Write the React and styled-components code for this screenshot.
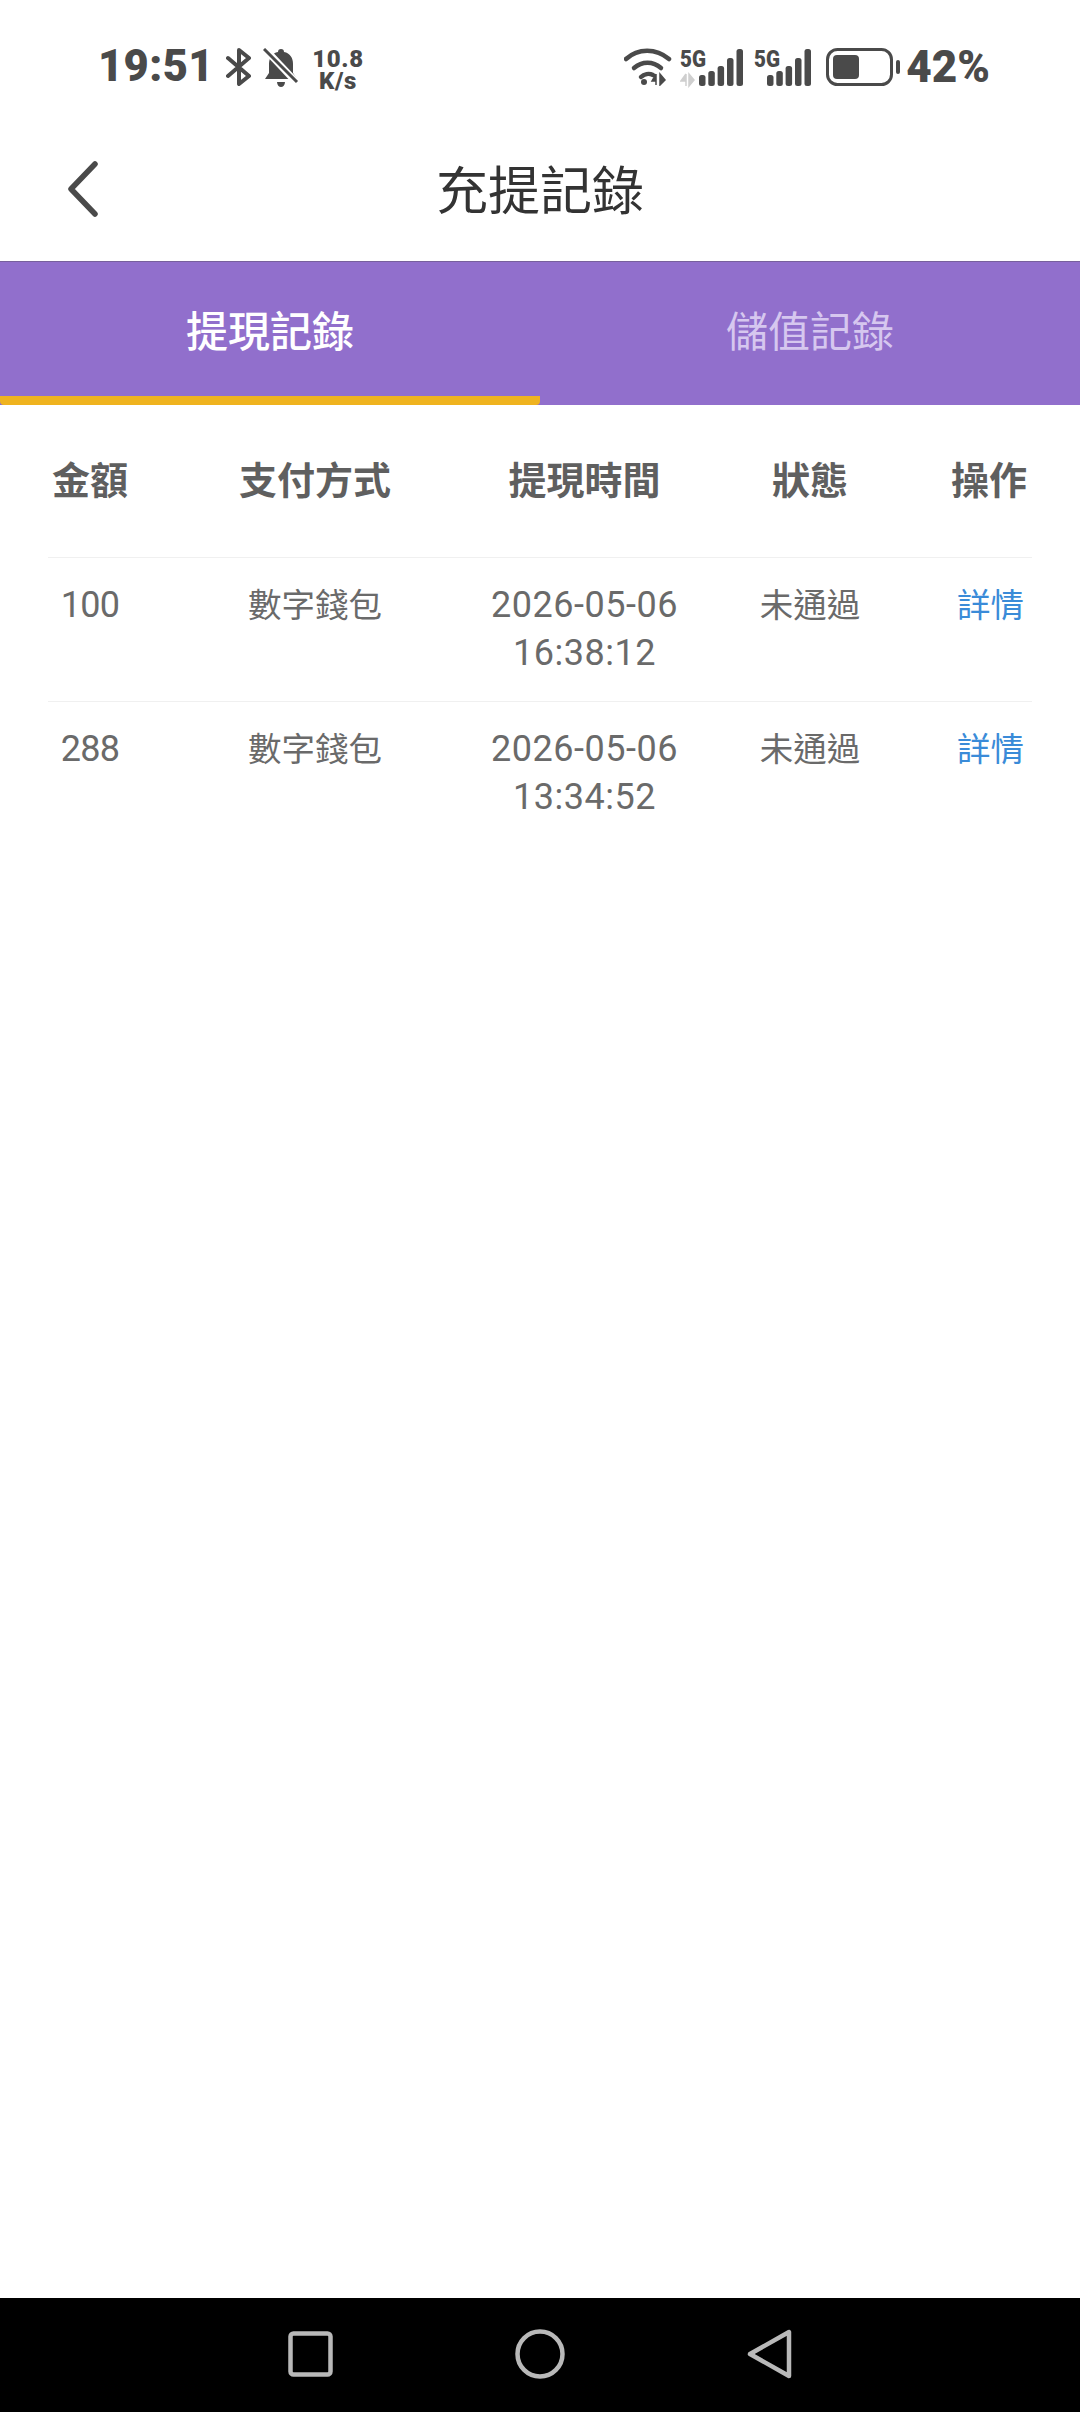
import React from "react";
import styled, { createGlobalStyle } from "styled-components";

const CJK = `"Noto Sans CJK TC", "Noto Sans CJK SC", sans-serif`;
const LATIN = `Roboto, "Noto Sans CJK TC", sans-serif`;

const Global = createGlobalStyle`
  html, body { margin: 0; padding: 0; background: #fff; }
  #root { height: 2412px; }
  * { box-sizing: border-box; }
`;

const Screen = styled.div`
  width: 1080px;
  height: 2412px;
  display: flex;
  flex-direction: column;
  background: #fff;
  font-family: ${CJK};
`;

const StatusBar = styled.div`
  height: 117px;
  padding: 48px 90px 0 98px;
  display: flex;
  justify-content: space-between;
  align-items: flex-start;
  color: #4a4a4a;
`;

const StatusGroup = styled.div`
  display: flex;
  align-items: flex-start;
`;

const Clock = styled.span`
  font: 900 43.5px/38px ${LATIN};
  letter-spacing: 0.4px;
  width: 128px;
`;

const Speed = styled.span`
  margin-left: 11px;
  width: 56px;
  display: flex;
  flex-direction: column;
  align-items: center;
  font: 900 24px/22px ${LATIN};
  letter-spacing: 0.6px;
`;

const Percent = styled.span`
  font: 900 44px/38px ${LATIN};
  margin-left: 6px;
`;

const Icon = styled.svg`
  display: block;
  flex: none;
  margin-left: ${(p) => p.$ml || 0}px;
`;

const SignalIcon = styled(Icon)`
  margin-top: -6px;
`;

const TitleBar = styled.header`
  height: 144px;
  display: grid;
  grid-template-columns: 1fr auto 1fr;
  align-items: center;
`;

const BackButton = styled.div`
  padding-left: 65px;
  display: flex;
  align-items: center;
`;

const Title = styled.h1`
  margin: 0 0 2px;
  font: 400 52px/60px ${CJK};
  color: #333;
`;

const Tabs = styled.nav`
  height: 144px;
  display: flex;
  background: #916fcc;
  border-top: 1px solid #77609c;
`;

const Tab = styled.div`
  flex: 1;
  display: flex;
  align-items: center;
  justify-content: center;
  padding-bottom: 0;
  font: ${(p) => (p.$active ? 500 : 400)} 42px/60px ${CJK};
  color: ${(p) => (p.$active ? "#fff" : "#d6c7ef")};
  border-bottom: 9px solid ${(p) => (p.$active ? "#efb31f" : "transparent")};
  border-radius: 0 0 4px 4px;
`;

const Table = styled.section`
  flex: 1;
  padding: 0 48px;
`;

const Row = styled.div`
  display: grid;
  grid-template-columns: 102px 330px 209px 257px 86px;
  ${(p) =>
    p.$head
      ? "height: 152px; align-items: center; padding-bottom: 6px;"
      : "padding: 21px 0 24px; border-top: 1px solid #f0f0f0;"}
`;

const HeadCell = styled.div`
  text-align: center;
  font: 700 38px/48px ${CJK};
  color: #5f5f5f;
  padding-right: ${(p) => p.$pr || 0}px;
`;

const Cell = styled.div`
  text-align: center;
  font: 400 33.5px/48px ${CJK};
  color: ${(p) => (p.$link ? "#3a8bd8" : "#6a6a6a")};
  padding-right: ${(p) => p.$pr || 0}px;
  padding-left: ${(p) => (p.$link ? 3 : 0)}px;
`;

const NumCell = styled(Cell)`
  font: 400 36px/48px ${LATIN};
  letter-spacing: 0.5px;
  padding-top: 2px;
`;

const AmountCell = styled(NumCell)`
  letter-spacing: -0.8px;
`;

const NavBar = styled.footer`
  height: 114px;
  background: #000;
  display: flex;
  align-items: center;
  justify-content: center;
  gap: 182px;
  padding-bottom: 2px;
`;

const Signal = ({ ml, barX, arrows }) => (
  <SignalIcon width={barX + 44} height="46" viewBox={`0 -6 ${barX + 44} 46`} $ml={ml}>
    <text x="0" y="19" fontFamily="Roboto, sans-serif" fontWeight="900" fontSize="24" fill="#4a4a4a" textLength="26" lengthAdjust="spacingAndGlyphs">5G</text>
    {arrows && (
      <path d="M6 26v12M6 26l-5 7h5M9 38V26l5 6z" fill="#cfcfcf" stroke="#cfcfcf" strokeWidth="1.5" />
    )}
    {[
      [0, 27],
      [9.3, 23],
      [18.6, 18],
      [28, 10],
      [37.5, 1],
    ].map(([x, y]) => (
      <rect key={x} x={barX + x} y={y} width="6.5" height={38 - y} rx="2.5" fill="#4a4a4a" />
    ))}
  </SignalIcon>
);

const rows = [
  { amount: "100", date: "2026-05-06", time: "16:38:12" },
  { amount: "288", date: "2026-05-06", time: "13:34:52" },
];

export default function App() {
  return (
    <Screen>
      <Global />
      <StatusBar>
        <StatusGroup>
          <Clock>19:51</Clock>
          <Icon width="26" height="38" viewBox="0 0 26 38" fill="none" stroke="#4a4a4a" strokeWidth="4" strokeLinejoin="round" strokeLinecap="round">
            <path d="M2 10l21 18-10 8V2l10 8L2 28" />
          </Icon>
          <Icon width="36" height="40" viewBox="0 0 36 40" $ml={11}>
            <path d="M18 1c2 0 3 1 3 3 6 1 9 6 9 12v9l4 6H2l4-6v-9c0-6 3-11 9-12 0-2 1-3 3-3z" fill="#4a4a4a" />
            <path d="M14 34h8c0 3-2 5-4 5s-4-2-4-5z" fill="#4a4a4a" />
            <path d="M1 0l34 36" stroke="#fff" strokeWidth="7" />
            <path d="M1 1l33 33" stroke="#4a4a4a" strokeWidth="3" />
          </Icon>
          <Speed>
            <span>10.8</span>
            <span>K/s</span>
          </Speed>
        </StatusGroup>
        <StatusGroup>
          <Icon width="48" height="38" viewBox="0 0 48 38" fill="none" stroke="#4a4a4a" strokeWidth="4.5" strokeLinecap="round">
            <path d="M2 11C14 0 32 0 45 11" />
            <path d="M10 20c8-7 19-7 27 0" />
            <path d="M17 29c3-3 8-4 12-2" />
            <circle cx="20" cy="34" r="3" fill="#4a4a4a" stroke="none" />
            <path d="M32 26v11M32 26l-4 7h4M36 37V26l5 6z" fill="#4a4a4a" stroke="#4a4a4a" strokeWidth="1.5" strokeLinecap="butt" />
          </Icon>
          <Signal ml={8} barX={19} arrows />
          <Signal ml={11} barX={13} />
          <Icon width="74" height="38" viewBox="0 0 74 38" $ml={15}>
            <rect x="1.5" y="1.5" width="64" height="35" rx="10" fill="none" stroke="#4a4a4a" strokeWidth="3" />
            <rect x="7" y="7" width="26" height="24" rx="4" fill="#4a4a4a" />
            <rect x="70" y="12" width="4" height="14" rx="2" fill="#4a4a4a" />
          </Icon>
          <Percent>42%</Percent>
        </StatusGroup>
      </StatusBar>

      <TitleBar>
        <BackButton>
          <svg width="34" height="56" viewBox="0 0 34 56" fill="none" stroke="#4a4a4a" strokeWidth="5.5" strokeLinecap="round" strokeLinejoin="round">
            <path d="M30 3L6 28l24 25" />
          </svg>
        </BackButton>
        <Title>充提記錄</Title>
      </TitleBar>

      <Tabs>
        <Tab $active>提現記錄</Tab>
        <Tab>儲值記錄</Tab>
      </Tabs>

      <Table>
        <Row $head>
          <HeadCell $pr={18}>金額</HeadCell>
          <HeadCell>支付方式</HeadCell>
          <HeadCell>提現時間</HeadCell>
          <HeadCell $pr={15}>狀態</HeadCell>
          <HeadCell>操作</HeadCell>
        </Row>
        {rows.map((r) => (
          <Row key={r.time}>
            <AmountCell $pr={18}>{r.amount}</AmountCell>
            <Cell>數字錢包</Cell>
            <NumCell>
              {r.date}
              <br />
              {r.time}
            </NumCell>
            <Cell $pr={15}>未通過</Cell>
            <Cell $link>詳情</Cell>
          </Row>
        ))}
      </Table>

      <NavBar>
        <svg width="45" height="46" viewBox="0 0 45 46" fill="none" stroke="#b9b9b9" strokeWidth="4.5">
          <rect x="2.5" y="2.5" width="40" height="41" rx="3" />
        </svg>
        <svg width="50" height="50" viewBox="0 0 50 50" fill="none" stroke="#b9b9b9" strokeWidth="4.5">
          <circle cx="25" cy="25" r="22.5" />
        </svg>
        <svg width="46" height="50" viewBox="0 0 46 50" fill="none" stroke="#b9b9b9" strokeWidth="4.5" strokeLinejoin="round">
          <path d="M42 3v44L3 25z" />
        </svg>
      </NavBar>
    </Screen>
  );
}
